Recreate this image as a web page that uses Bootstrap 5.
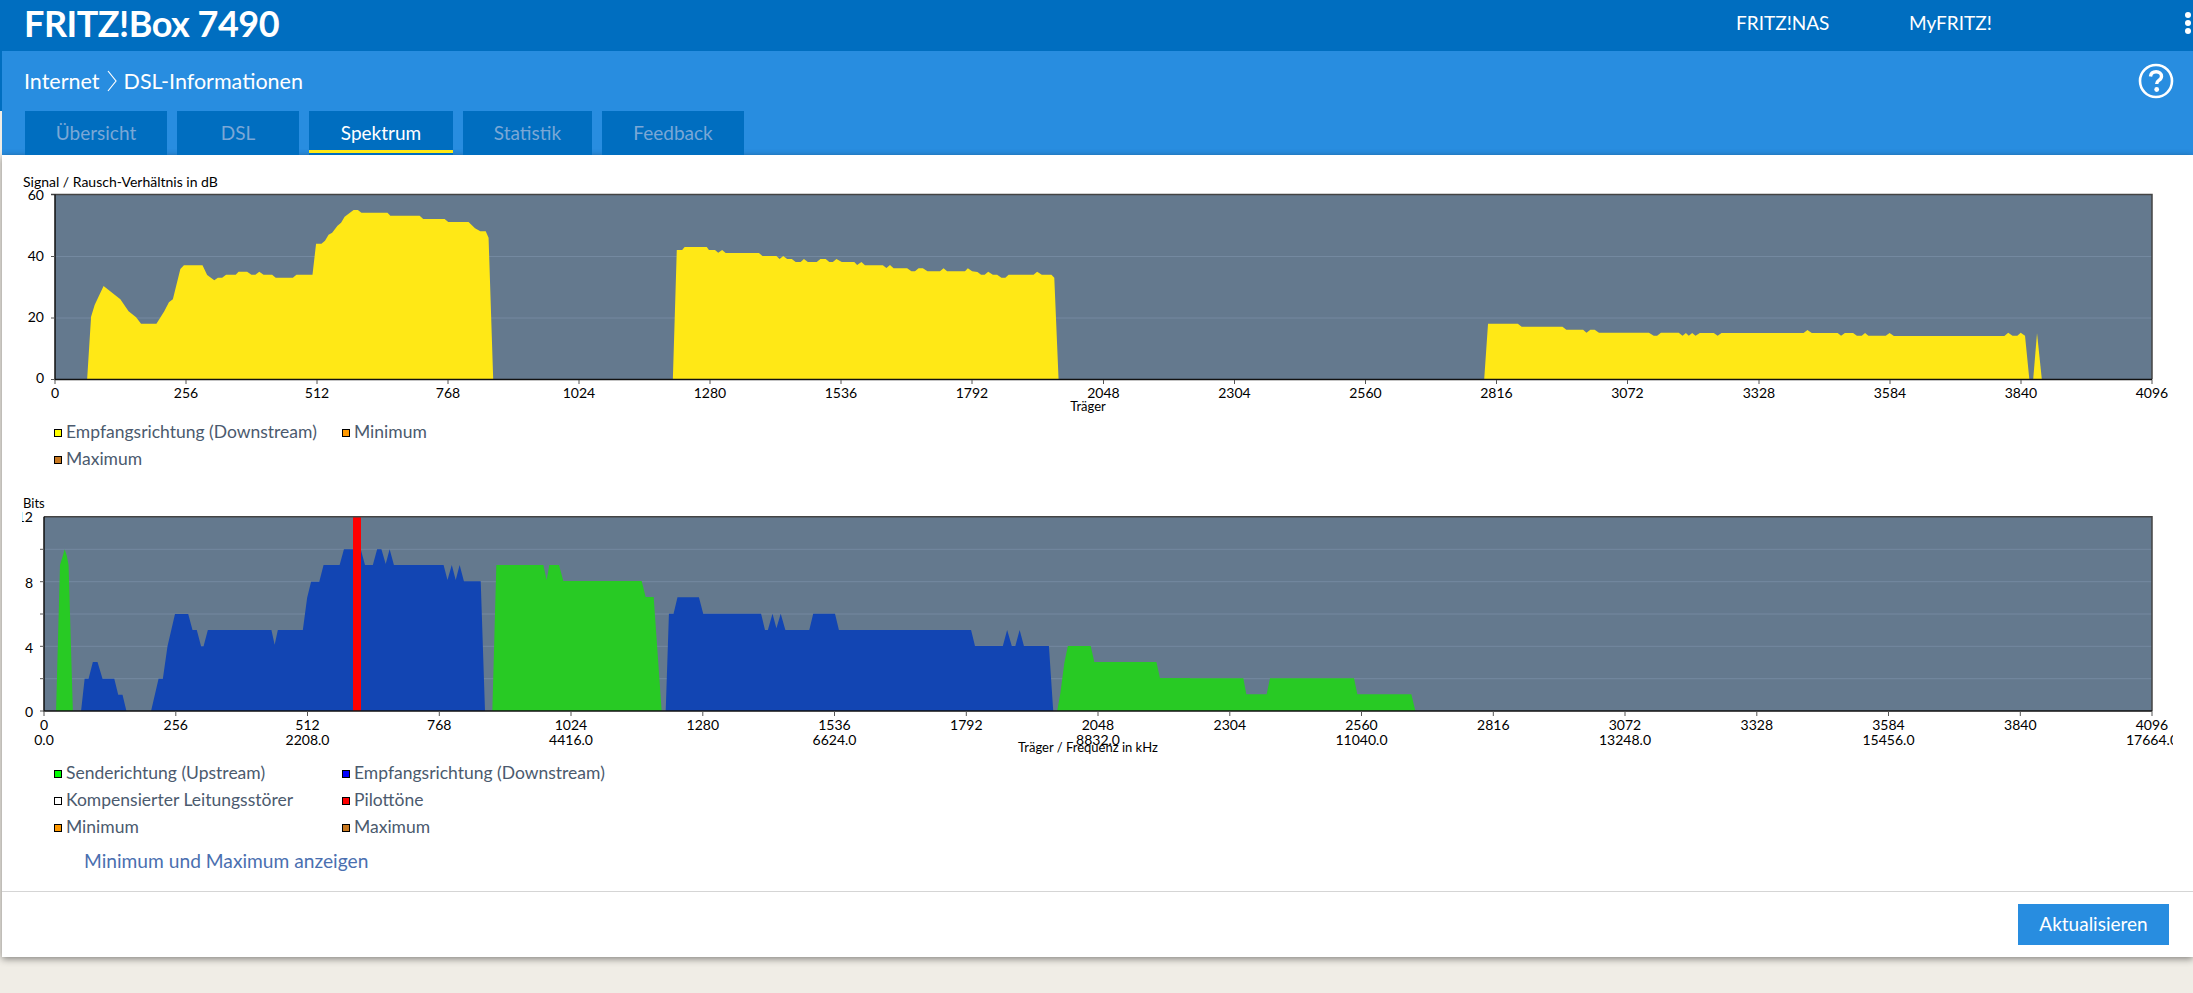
<!DOCTYPE html>
<html lang="de">
<head>
<meta charset="utf-8">
<title>FRITZ!Box 7490</title>
<link href="https://cdn.jsdelivr.net/npm/bootstrap@5.3.0/dist/css/bootstrap.min.css" rel="stylesheet">
<style>
html,body{height:100%;overflow:hidden}
body{background:#f0ede6;font-family:"Lato","Noto Sans",sans-serif;color:#4b5a6e}
.fb-top{background:#006ec0;height:51px;padding-left:24px;color:#fff}
.fb-title{font-size:36px;font-weight:700;line-height:46px;letter-spacing:-.5px;margin:0}
.fb-toplink{color:#fff;font-size:19px;text-decoration:none;line-height:46px}
.fb-nas{left:1736px}
.fb-my{left:1909px}
.fb-dots{width:6px;gap:2px;right:2px;top:12px}
.fb-dots i{display:block;width:6px;height:6px;border-radius:50%;background:#fff}
.fb-crumb{background:#288de0;height:60px;border-left:2px solid #006ec0;padding:0 19px 0 22px;color:#fff;font-size:21.500px}
.fb-chev{margin:0 7px}
.fb-tabs{background:#288de0;margin-left:2px;height:44px;padding-left:23px;gap:10px}
.fb-tab{display:block;background:#006ec0;color:#7aa7d6;height:44px;line-height:44px;text-align:center;font-size:19px;text-decoration:none}
.fb-tab.on{color:#fff;position:relative}
.fb-tab.on::after{content:"";position:absolute;left:0;right:0;top:39px;height:3px;background:#ffe816}
.w142{width:142px}.w122{width:122px}.w144{width:144px}.w129{width:129px}
.fb-sheet{background:#fff;margin-left:2px;height:802px;padding-top:17px;box-shadow:0 2px 7px rgba(0,0,0,.45)}
.fb-svg{display:block}
.fb-svg text{font-family:"Lato","Noto Sans",sans-serif;fill:#000}
.fb-svg .tk{font-size:14px;text-anchor:middle}
.fb-svg .ya{font-size:14px;text-anchor:end}
.fb-svg .cap{font-size:13px}
.fb-svg .cap2{font-size:14px}
.plot{fill:#64798e}
.grid{stroke:#7489a0;stroke-width:1}
.axis{stroke:#111;stroke-width:1.5;fill:none}
.edge{stroke:#444;stroke-width:1.5;fill:none}
.tick{stroke:#555;stroke-width:1;fill:none}
.yel{fill:#ffe816}.grn{fill:#28ca24}.blu{fill:#1245b3}.redbar{fill:#f00}
.fb-legend{display:grid;grid-template-columns:288px 1fr;margin-left:52px;font-size:17.500px;line-height:27px}
.fb-legend-a{margin-top:4px}
.fb-sw{display:inline-block;width:8px;height:8px;border:1px solid #000;margin-right:4px;vertical-align:1px}
.sw-yel{background:#ff0}.sw-org{background:#f90}.sw-brn{background:#c87820}.sw-grn{background:#0f0}.sw-blu{background:#00f}.sw-wht{background:#fff}.sw-red{background:#f00}
.mt-c2{margin-top:23px}
.fb-link{display:block;margin:7px 0 0 82px;font-size:19.200px;line-height:27px;color:#4a6fb0;text-decoration:none}
.fb-foot{border-top:1px solid #d5d5d5;margin-top:17px;padding:12px 24px 0 0}
.fb-btn{background:#288de0;color:#fff;border:0;border-radius:0;width:151px;height:41px;font-size:19px;padding:0}
.fb-btn:hover{background:#288de0;color:#fff}
</style>
</head>
<body>
<header class="fb-top d-flex position-relative">
  <h1 class="fb-title">FRITZ!Box 7490</h1>
  <a class="fb-toplink position-absolute fb-nas" href="#">FRITZ!NAS</a>
  <a class="fb-toplink position-absolute fb-my" href="#">MyFRITZ!</a>
  <div class="fb-dots position-absolute d-flex flex-column"><i></i><i></i><i></i></div>
</header>
<div class="fb-crumb d-flex align-items-center justify-content-between">
  <div class="d-flex align-items-center">
    <span>Internet</span>
    <svg class="fb-chev" width="10" height="22" viewBox="0 0 10 22"><path d="M1 1l8 10-8 10" fill="none" stroke="#fff" stroke-width="1.2"/></svg>
    <span>DSL-Informationen</span>
  </div>
  <svg width="36" height="36" viewBox="0 0 36 36"><circle cx="18" cy="18" r="16" fill="none" stroke="#fff" stroke-width="2.6"/><path d="M12.500 13.500c.4-3.200 2.600-4.800 5.600-4.800 3.200 0 5.400 1.800 5.400 4.500 0 2-1 3.100-2.700 4.200-1.500 1-2.100 1.800-2.100 3.600" fill="none" stroke="#fff" stroke-width="3.400"/><circle cx="18.700" cy="26.500" r="2.400" fill="#fff"/></svg>
</div>
<nav class="fb-tabs d-flex">
  <a class="fb-tab w142" href="#">Übersicht</a>
  <a class="fb-tab w122" href="#">DSL</a>
  <a class="fb-tab on w144" href="#">Spektrum</a>
  <a class="fb-tab w129" href="#">Statistik</a>
  <a class="fb-tab w142" href="#">Feedback</a>
</nav>
<main class="fb-sheet">
  <svg class="fb-svg" width="2191" height="242" viewBox="2 172 2191 242">
    <text class="cap2" x="23" y="187">Signal / Rausch-Verhältnis in dB</text>
    <rect class="plot" x="55" y="194.500" width="2097" height="185"/>
    <path class="grid" d="M55 256.500H2152M55 318H2152"/>
    <g transform="translate(0 170) scale(.35714 .33333)"><polygon class="yel" points="244,628 255,440 265,405 290,348 337,388 360,424 381,442 395,461 438,461 460,424 473,397 484,388 505,297 515,286 567,286 580,315 600,331 610,323 622,323 633,314 660,314 668,305 692,305 704,314 715,314 726,305 738,314 762,314 772,323 820,323 830,314 875,314 885,221 900,221 910,212 920,194 930,188 945,167 955,158 965,140 990,120 1002,120 1012,128 1085,128 1093,137 1175,137 1185,147 1245,147 1255,156 1312,156 1330,175 1345,184 1360,184 1368,203 1381,628"/></g>
    <g transform="translate(540 170) scale(.35714 .33333)"><polygon class="yel" points="372,628 383,240 398,240 405,231 467,231 473,240 490,240 499,248 510,240 520,249 613,249 623,258 662,258 671,267 681,258 692,267 705,267 716,276 730,276 739,267 750,276 775,276 785,267 800,267 810,276 820,276 830,267 845,276 880,276 888,285 900,276 910,286 960,286 970,294 980,285 990,295 1028,295 1040,304 1050,304 1060,295 1072,295 1085,304 1120,304 1130,295 1140,304 1190,304 1198,295 1210,304 1225,306 1235,314 1245,314 1255,305 1268,314 1280,314 1292,323 1303,323 1312,314 1382,314 1392,305 1405,314 1432,314 1440,323 1452,628"/></g>
    <g transform="translate(1440 300) scale(.48031 .33333)"><polygon class="yel" points="92,238 100,71 162,71 170,80 255,80 263,89 298,89 305,98 313,89 322,89 331,98 435,98 445,107 452,107 460,98 497,98 505,107 512,99 518,107 525,99 532,107 541,99 570,99 578,107 586,99 757,99 765,90 774,99 828,99 835,107 843,99 860,99 868,107 878,107 885,99 892,107 928,107 936,99 945,108 1175,108 1183,98 1192,107 1202,107 1209,98 1218,107 1227,238"/><polygon class="yel" points="1235,238 1243,100 1253,238"/></g>
    <path class="edge" d="M51 194.500H2152V379.500"/>
    <path class="axis" d="M55 194.500V379.500H2152"/>
    <path class="tick" d="M51 256.500h4M51 318h4M51 379.500h4M55 380v4M186 380v4M317 380v4M448 380v4M579 380v4M710 380v4M841 380v4M972 380v4M1103.500 380v4M1234.500 380v4M1365.500 380v4M1496.500 380v4M1627.500 380v4M1759 380v4M1890 380v4M2021 380v4M2152 380v4"/>
    <text class="ya" x="44" y="200">60</text><text class="ya" x="44" y="261">40</text><text class="ya" x="44" y="322">20</text><text class="ya" x="44" y="383">0</text>
    <text class="tk" x="55" y="398">0</text><text class="tk" x="186" y="398">256</text><text class="tk" x="317" y="398">512</text><text class="tk" x="448" y="398">768</text><text class="tk" x="579" y="398">1024</text><text class="tk" x="710" y="398">1280</text><text class="tk" x="841" y="398">1536</text><text class="tk" x="972" y="398">1792</text><text class="tk" x="1103.500" y="398">2048</text><text class="tk" x="1234.500" y="398">2304</text><text class="tk" x="1365.500" y="398">2560</text><text class="tk" x="1496.500" y="398">2816</text><text class="tk" x="1627.500" y="398">3072</text><text class="tk" x="1759" y="398">3328</text><text class="tk" x="1890" y="398">3584</text><text class="tk" x="2021" y="398">3840</text><text class="tk" x="2152" y="398">4096</text>
    <text class="cap" x="1088" y="411" text-anchor="middle">Träger</text>
  </svg>
  <div class="fb-legend fb-legend-a">
    <div><span class="fb-sw sw-yel"></span>Empfangsrichtung (Downstream)</div>
    <div><span class="fb-sw sw-org"></span>Minimum</div>
    <div><span class="fb-sw sw-brn"></span>Maximum</div>
  </div>
  <svg class="fb-svg mt-c2" width="2191" height="264" viewBox="2 495 2191 264">
    <defs><clipPath id="clipTop"><rect x="22" y="500" width="40" height="30"/></clipPath><clipPath id="clipRight"><rect x="2000" y="700" width="173" height="60"/></clipPath></defs>
    <text class="cap" x="23" y="508">Bits</text>
    <rect class="plot" x="44" y="516.700" width="2108" height="194.300"/>
    <path class="grid" d="M44 549.300H2152M44 581.700H2152M44 614H2152M44 646.300H2152M44 678.700H2152"/>
    <g transform="translate(0 490) scale(.35714 .33333)">
      <polygon class="grn" points="157,663 168,225 176,197 181,178 187,197 192,225 204,663"/>
      <polygon class="blu" points="227,663 237,566 248,566 260,516 273,516 287,566 320,566 331,614 343,614 354,663 423,663 444,566 456,566 469,469 490,372 527,372 539,420 551,420 563,469 570,469 582,420 760,420 769,464 778,420 848,420 860,323 871,275 894,275 906,225 951,225 963,178 1010,178 1022,225 1044,225 1056,178 1068,178 1080,222 1091,178 1103,225 1242,225 1253,270 1265,225 1276,270 1287,225 1299,274 1346,274 1358,663"/>
    </g>
    <g transform="translate(280 500) scale(.33333)"><polygon class="grn" points="637,633 649,195 790,195 800,240 808,195 837,195 850,243 1085,243 1097,291 1121,291 1145,633"/></g>
    <g transform="translate(640 500) scale(.35714 .33333)">
      <polygon class="blu" points="72,633 81,341 94,341 105,292 165,292 177,341 339,341 350,390 358,390 371,341 382,385 394,341 407,390 474,390 485,341 546,341 557,390 927,390 938,438 1016,438 1028,390 1041,438 1051,438 1063,390 1075,438 1145,438 1157,633"/>
      <polygon class="grn" points="1168,633 1177,580 1188,490 1198,438 1262,438 1272,486 1446,486 1456,535 1540,535 1540,633"/>
    </g>
    <g transform="translate(1100 560) scale(.33333)"><polygon class="grn" points="0,355 180,355 430,355 439,403 500,403 510,355 762,355 772,403 934,403 946,453 0,453"/></g>
    <rect class="redbar" x="353" y="516.700" width="8" height="194.300"/>
    <path class="edge" d="M44 516.700H2152V711"/>
    <path class="axis" d="M44 516.700V711H2152"/>
    <path class="tick" d="M40 549.300h4M40 581.700h4M40 614h4M40 646.300h4M40 678.700h4M40 711h4M44 711v5M175.800 711v5M307.500 711v5M439.300 711v5M571 711v5M702.800 711v5M834.500 711v5M966.300 711v5M1098 711v5M1229.800 711v5M1361.500 711v5M1493.300 711v5M1625 711v5M1756.800 711v5M1888.500 711v5M2020.300 711v5M2152 711v5"/>
    <g clip-path="url(#clipTop)"><text class="ya" x="33" y="522">12</text></g>
    <text class="ya" x="33" y="588">8</text><text class="ya" x="33" y="653">4</text><text class="ya" x="33" y="717">0</text>
    <text class="tk" x="44" y="730">0</text><text class="tk" x="175.800" y="730">256</text><text class="tk" x="307.500" y="730">512</text><text class="tk" x="439.300" y="730">768</text><text class="tk" x="571" y="730">1024</text><text class="tk" x="702.800" y="730">1280</text><text class="tk" x="834.500" y="730">1536</text><text class="tk" x="966.300" y="730">1792</text><text class="tk" x="1098" y="730">2048</text><text class="tk" x="1229.800" y="730">2304</text><text class="tk" x="1361.500" y="730">2560</text><text class="tk" x="1493.300" y="730">2816</text><text class="tk" x="1625" y="730">3072</text><text class="tk" x="1756.800" y="730">3328</text><text class="tk" x="1888.500" y="730">3584</text><text class="tk" x="2020.300" y="730">3840</text><text class="tk" x="2152" y="730">4096</text>
    <text class="tk" x="44" y="745">0.0</text><text class="tk" x="307.500" y="745">2208.0</text><text class="tk" x="571" y="745">4416.0</text><text class="tk" x="834.500" y="745">6624.0</text><text class="tk" x="1098" y="745">8832.0</text><text class="tk" x="1361.500" y="745">11040.0</text><text class="tk" x="1625" y="745">13248.0</text><text class="tk" x="1888.500" y="745">15456.0</text><g clip-path="url(#clipRight)"><text class="tk" x="2152" y="745">17664.0</text></g>
    <text class="cap" x="1088" y="752" text-anchor="middle">Träger / Frequenz in kHz</text>
  </svg>
  <div class="fb-legend">
    <div><span class="fb-sw sw-grn"></span>Senderichtung (Upstream)</div>
    <div><span class="fb-sw sw-blu"></span>Empfangsrichtung (Downstream)</div>
    <div><span class="fb-sw sw-wht"></span>Kompensierter Leitungsstörer</div>
    <div><span class="fb-sw sw-red"></span>Pilottöne</div>
    <div><span class="fb-sw sw-org"></span>Minimum</div>
    <div><span class="fb-sw sw-brn"></span>Maximum</div>
  </div>
  <a class="fb-link" href="#">Minimum und Maximum anzeigen</a>
  <div class="fb-foot d-flex justify-content-end"><button type="button" class="btn fb-btn">Aktualisieren</button></div>
</main>
<script src="https://cdn.jsdelivr.net/npm/bootstrap@5.3.0/dist/js/bootstrap.bundle.min.js"></script>
</body>
</html>
